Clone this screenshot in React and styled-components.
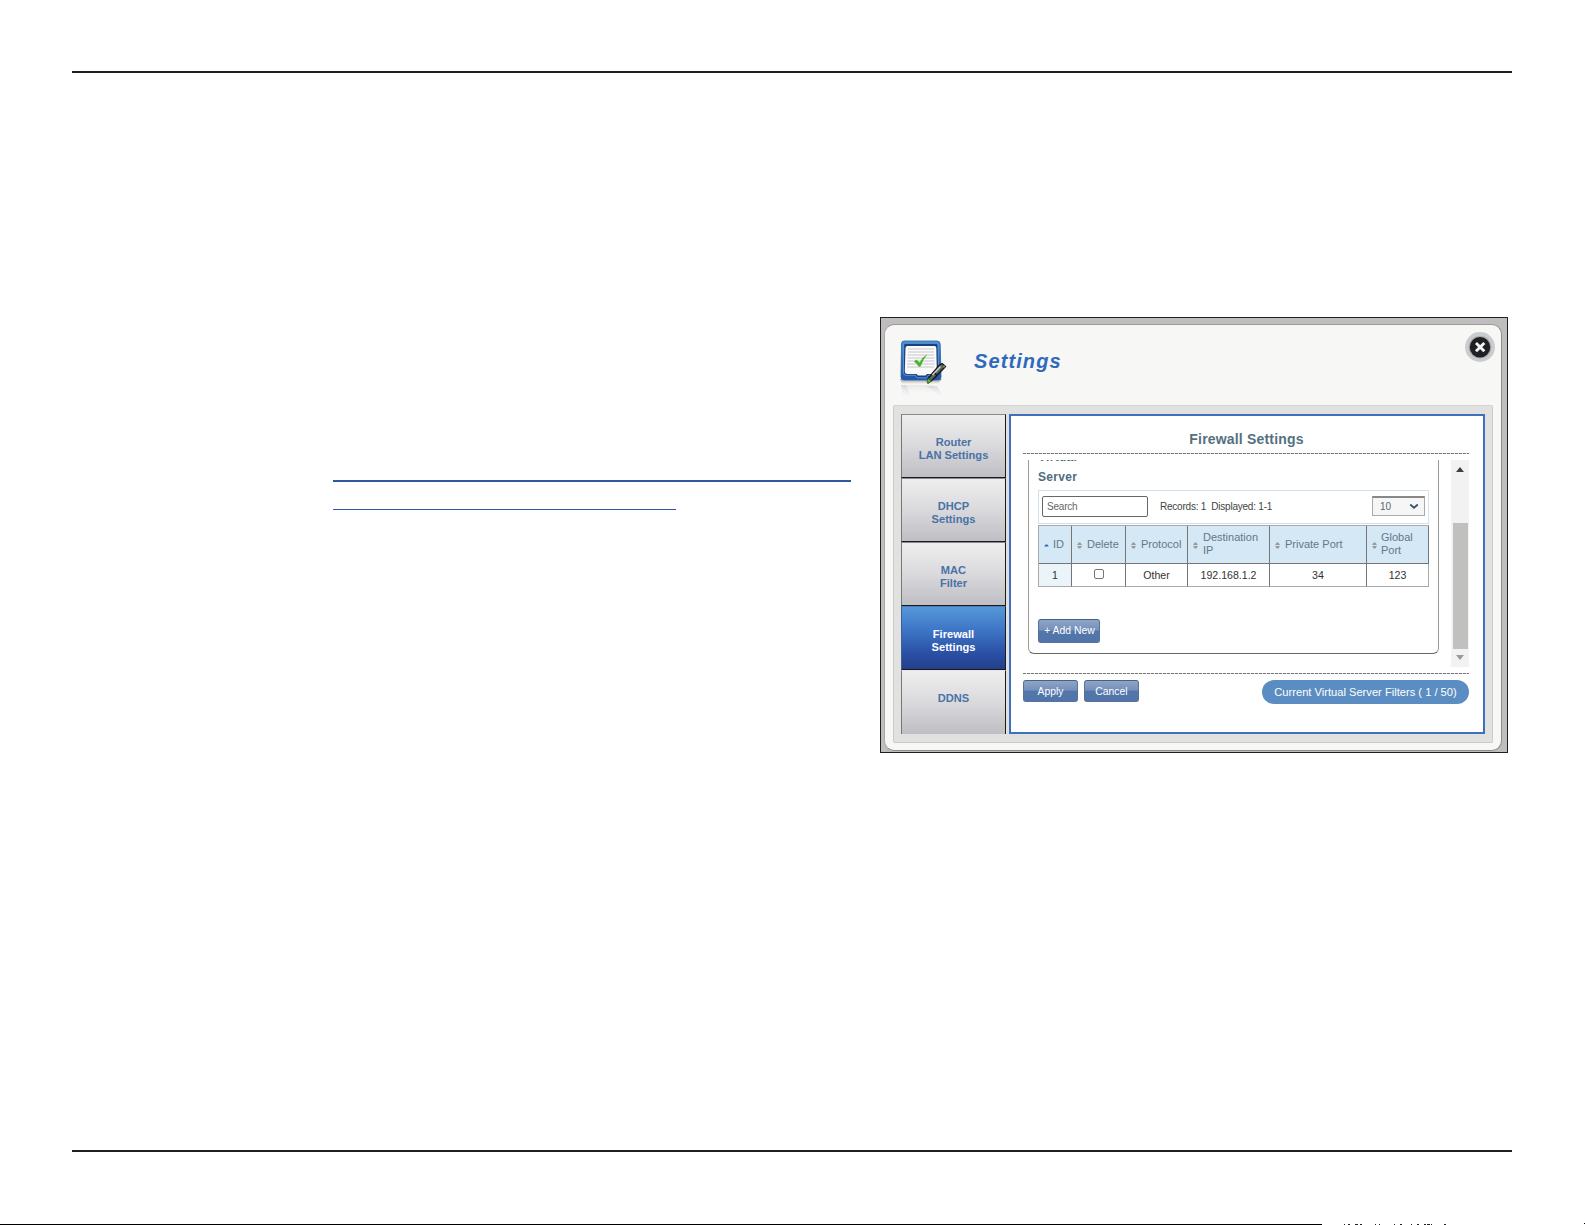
import React, { useState } from 'react'
import styled, { createGlobalStyle, css } from 'styled-components'


const GlobalStyle = createGlobalStyle`
  *, *::before, *::after {
    box-sizing: border-box;
  }
  body {
    margin: 0;
    background: #fff;
    font-family: "Liberation Sans", Arial, sans-serif;
  }
`;

const Page = styled.div`
  display: flex;
  flex-direction: column;
  width: 1585px;
  height: 1225px;
  overflow: hidden;
  padding-top: 71px;
`;

const Rule = styled.hr`
  flex: none;
  width: 1440px;
  height: 2px;
  margin: 0 0 0 72px;
  border: 0;
  background: #231f20;
`;

const Body = styled.main`
  display: flex;
  align-items: flex-start;
  height: 1077px;
  padding: 244px 0 0 333px;
`;

const LinkColumn = styled.div`
  display: flex;
  flex-direction: column;
  gap: 27px;
  width: 547px;
  padding-top: 163px;
`;

const LinkLine = styled.div`
  width: ${props => props.$width}px;
  height: ${props => props.$weight}px;
  background: #30579f;
`;

const PageFooter = styled.footer`
  margin-top: 71px;
  height: 2px;

  svg {
    display: block;
  }
`;

const Frame = styled.section`
  width: 628px;
  height: 436px;
  padding: 6px 5px 1px 3px;
  border: 1px solid #231f20;
  background: #bfbdbd;
`;

const Dialog = styled.div`
  height: 427px;
  padding: 0 8px 7px 8px;
  border: 1px solid #8d8d8d;
  border-top-color: #9b9b9b;
  border-left-color: #aaa9a8;
  border-radius: 10px;
  background: #f7f7f5;
`;

const DialogHeader = styled.header`
  display: flex;
  align-items: flex-start;
  height: 80px;
  padding: 15px 0 0 7px;
`;

const DialogTitle = styled.h1`
  flex: 1;
  margin: 10px 0 0 26px;
  font-size: 20px;
  line-height: 23px;
  font-weight: bold;
  font-style: italic;
  letter-spacing: 1.1px;
  color: #2f69be;
`;

const CloseButton = styled.button`
  width: 30px;
  height: 30px;
  margin: -8px -2px 0 0;
  padding: 0;
  border: 0;
  background: none;

  svg {
    display: block;
  }
`;

const DialogBody = styled.div`
  display: flex;
  gap: 3px;
  height: 338px;
  padding: 8px 7px 0 7px;
  border: 1px solid #cbcbc9;
  border-top-color: #d3d3d1;
  border-radius: 2px;
  background: #e1e1df;
`;

const Menu = styled.nav`
  width: 105px;
  height: 320px;
`;

const MenuItem = styled.div`
  height: 64px;
  padding-top: 21px;
  border: 1px solid #1b1b1d;
  border-left-color: #777;
  border-top-color: #8a8a8a;
  background: linear-gradient(#eeeeee, #dcdbde 45%, #bfbec4);
  color: #4873a7;
  font-size: 11.1px;
  line-height: 13px;
  font-weight: bold;
  text-align: center;
  white-space: pre-line;

  &:last-child {
    border-top-color: #e6e6e8;
    border-bottom: 0;
  }

  ${props => props.$active && css`
    background: linear-gradient(#5597d9, #3c73c4 40%, #2a4fa4 75%, #243f8a);
    border-top-color: #4a7db8;
    border-left-color: #3c5f9b;
    color: #fff;
  `}
`;

const Panel = styled.div`
  width: 476px;
  height: 320px;
  padding: 0 14px 0 12px;
  border: 2px solid #3f70c0;
  background: #fff;
`;

const PanelTitle = styled.h2`
  height: 37px;
  margin: 0;
  padding: 14px 0 0 1px;
  font-size: 14px;
  line-height: 18px;
  letter-spacing: 0.18px;
  text-align: center;
  color: #54707f;
`;

const DashedLine = styled.div`
  height: 1px;
  background: repeating-linear-gradient(90deg, #777 0 3px, #ddd 3px 4px);
`;

const ScrollArea = styled.div`
  display: flex;
  justify-content: space-between;
  height: 207px;
  margin: 6px 0;
  overflow: hidden;
`;

const Fieldset = styled.div`
  width: 411px;
  height: 194px;
  margin-left: 5px;
  padding: 0 9px;
  border: 1px solid #9a9a9a;
  border-top: 0;
  border-bottom-color: #666;
  border-radius: 0 0 6px 6px;
`;

/* The first line is scrolled out of view, only its feet are left. */
const Legend = styled.div`
  height: 43px;
  margin-top: -13px;
  font-size: 12px;
  line-height: 20px;
  font-weight: bold;
  letter-spacing: 0.3px;
  color: #4f6b7c;
`;

const Toolbar = styled.div`
  display: flex;
  align-items: center;
  width: 391px;
  height: 34px;
  padding: 0 3px;
  border: 1px solid #d3e1ec;
  font-size: 9.5px;
  color: #444;
`;

const SearchInput = styled.input`
  width: 106px;
  height: 21px;
  margin-top: -1px;
  padding: 0 4px;
  border: 1px solid #666;
  border-radius: 2px;
  font: 10px "Liberation Sans", Arial, sans-serif;
  letter-spacing: -0.2px;

  &::placeholder {
    color: #666;
    opacity: 1;
  }
`;

const Records = styled.span`
  flex: 1;
  padding-left: 12px;
  margin-top: -1px;
  font-size: 10px;
  letter-spacing: -0.22px;
  white-space: pre;
`;

const PageSize = styled.div`
  display: flex;
  align-items: center;
  justify-content: space-between;
  width: 53px;
  height: 20px;
  margin-top: -2px;
  padding: 0 5px 1px 7px;
  border: 1px solid #aaa;
  border-top: 2px solid #888;
  background: #f6f6f6;
  font-size: 10px;
  color: #5b6670;
`;

const Table = styled.div`
  display: grid;
  grid-template-columns: 33px 54px 62px 82px 97px 62px;
  grid-template-rows: 38px 23px;
  width: 391px;
  margin-top: 1px;
  border: 1px solid #aaa;
  border-width: 1px 0 0 1px;
`;

const HeadCell = styled.div`
  display: flex;
  align-items: center;
  gap: ${props => props.$gap || 5}px;
  padding: 0 0 1px 5px;
  border-right: 1px solid #757575;
  border-bottom: 1px solid #757575;
  background: #d5e8f5;
  color: #657786;
  font-size: 11px;
  line-height: 13px;
  white-space: pre-line;

  &:last-of-type {
    border-right-color: #aaa;
  }

  svg {
    flex: none;
    margin-top: 2px;
  }
`;

const Cell = styled.div`
  display: flex;
  align-items: center;
  justify-content: center;
  border-right: 1px solid #757575;
  border-bottom: 1px solid #aaa;
  background: ${props => (props.$sorted ? '#eaf4f9' : '#fff')};
  color: #333;
  font-size: 10.6px;

  &:last-child {
    border-right-color: #aaa;
  }
`;

const CheckBox = styled.input`
  appearance: none;
  width: 10px;
  height: 10px;
  margin: -2px 0 0 0;
  border: 1px solid #777;
  border-radius: 2px;
`;

const Button = styled.button`
  display: block;
  width: ${props => props.$width || 55}px;
  height: ${props => props.$height || 22}px;
  padding: 1px 0 0 0;
  border: 1px solid #5a7298;
  border-top-color: #466087;
  border-radius: 3px;
  background: linear-gradient(#8fa5c6, #7590bb 45%, #5376aa 52%, #5175aa);
  color: #fff;
  font: 10.4px "Liberation Sans", Arial, sans-serif;
`;

const AddButton = styled(Button)`
  margin-top: 32px;
  padding: 0 0 1px 1px;
`;

const ScrollBar = styled.div`
  display: flex;
  flex-direction: column;
  align-items: center;
  width: 18px;
  padding: 7px 0 7px;
  background: #f2f2f2;
`;

const ScrollThumb = styled.div`
  width: 15px;
  height: 127px;
  margin: 51px 0 6px;
  background: #c0c0be;
`;

const Arrow = styled.div`
  height: 5px;
  border: 4px solid transparent;
  border-top-width: 0;
  border-bottom: 5px solid #404040;

  ${props => props.$down && css`
    border-top: 5px solid #999;
    border-bottom: 0;
  `}
`;

const Actions = styled.div`
  display: flex;
  align-items: flex-start;
  gap: 6px;
  margin-top: 6px;
`;

const FilterCount = styled.div`
  width: 207px;
  height: 24px;
  margin-left: auto;
  border-radius: 12px;
  background: #5b8dc2;
  color: #fff;
  font-size: 11.15px;
  line-height: 24px;
  text-align: center;
  white-space: nowrap;
`;

const SettingsIcon = () => (
  <svg width="48" height="62" viewBox="0 0 48 62">
    <defs>
      <linearGradient id="tablet" x1="0" y1="0" x2="0" y2="1">
        <stop offset="0" stopColor="#4f93d2" />
        <stop offset="0.5" stopColor="#2c67b2" />
        <stop offset="1" stopColor="#2358ab" />
      </linearGradient>
      <linearGradient id="mirror" x1="0" y1="0" x2="0" y2="1">
        <stop offset="0" stopColor="#c9ced5" stopOpacity="0.75" />
        <stop offset="1" stopColor="#f7f7f5" stopOpacity="0" />
      </linearGradient>
      <linearGradient id="shade" x1="0" y1="0" x2="0" y2="1">
        <stop offset="0" stopColor="#777" />
        <stop offset="1" stopColor="#777" stopOpacity="0" />
      </linearGradient>
    </defs>
    <path d="M1 45 L6 45 L12 58 L3 55 Z M26 46 H37 L45 59 Z" fill="url(#mirror)" />
    <path d="M4 45 H33 L38 55 H8 Z" fill="url(#mirror)" opacity="0.5" />
    <path d="M0 39 H42 L38 44 H2 Z" fill="url(#shade)" opacity="0.7" />
    <path d="M4 1 H37 Q40 1 40.2 4 L41 37 Q41 40 38 40 H4 Q1 40 1 37 L1.5 4 Q1.5 1 4 1 Z" fill="url(#tablet)" stroke="#2a5fa6" strokeWidth="0.8" />
    <path d="M5.5 3.3 H36.2 Q38 3.3 38 5.5 L38.7 32 Q38.7 35.3 36 35.3 H28 L26.5 37.8 H17 L15.5 35.3 H6 Q3.3 35.3 3.4 32 L3.7 5 Q3.7 3.3 5.5 3.3 Z" fill="#183f82" stroke="#69a7df" strokeWidth="0.8" />
    <path d="M7.5 6 H34.5 Q36.3 6 36.3 8 L36.8 31 Q36.8 34 34 34 H27 L25.5 35.5 H18 L16.5 34 H7.5 Q4.7 34 4.8 31 L5.5 8 Q5.5 6 7.5 6 Z" fill="#fafafa" />
    <path d="M8 9 H34 M8 12 H34 M7.5 15 H34 M7.5 18 H34.5 M7.5 21 H34.5 M7 24 H34.5 M7 27 H34" stroke="#c5c5c5" strokeWidth="1.2" />
    <path d="M14 21.5 L16.5 19.5 L19.5 22.5 Q22.5 17 27.5 14 Q23 19.5 20.5 26.5 L18.7 26.8 Q17 23.5 14 21.5 Z" fill="#47b42d" />
    <path d="M42 23.5 L45.5 26.5 L33 39.5 L28 43 L28.5 38 L39.5 25 Z" fill="#5c6262" stroke="#17191a" strokeWidth="1.4" strokeLinejoin="round" />
    <path d="M40.5 26.5 L32.5 35" stroke="#c9cfcc" strokeWidth="1.6" />
    <path d="M36.5 35 L35 33.2" stroke="#17191a" strokeWidth="1.6" />
    <path d="M28.3 38.2 L31.5 41.2 L28 43.2 L26.8 41.5 Z" fill="#53b536" stroke="#2c4b29" strokeWidth="0.6" />
    <circle cx="44" cy="26.5" r="1.1" fill="#64b14e" />
  </svg>
);

const CloseIcon = () => (
  <svg width="30" height="30" viewBox="0 0 30 30">
    <circle cx="15" cy="15" r="15" fill="#cbccd0" />
    <circle cx="15" cy="15.3" r="11.3" fill="#a7a8ad" />
    <circle cx="15" cy="15.3" r="10.2" fill="#1f2023" />
    <path d="M12 12 L18.3 18.3 M18.3 12 L12 18.3" stroke="#f3f3f3" strokeWidth="2.9" strokeLinecap="square" />
  </svg>
);

const SortIcon = ({ sorted }) => (
  <svg width="5" height="7" viewBox="0 0 5 7">
    {sorted
      ? <path d="M0.2 4.6 L1.7 2.6 H3.3 L4.8 4.6 Z" fill="#2464c4" />
      : <path d="M0 3 L1.7 0.6 H3.3 L5 3 Z M0 4 L1.7 6.4 H3.3 L5 4 Z" fill="#98999b" />}
  </svg>
);

const ChevronIcon = () => (
  <svg width="10" height="7" viewBox="0 0 10 7">
    <path d="M1.2 1.5 L5 4.8 L8.8 1.5" fill="none" stroke="#3c556f" strokeWidth="1.9" />
  </svg>
);

const menuItems = ['Router\nLAN Settings', 'DHCP\nSettings', 'MAC\nFilter', 'Firewall\nSettings', 'DDNS'];

const columns = [
  { label: 'ID', sorted: true, gap: 4 },
  { label: 'Delete' },
  { label: 'Protocol' },
  { label: 'Destination\nIP' },
  { label: 'Private Port' },
  { label: 'Global\nPort', gap: 4 },
];

// x and width of the marks on the last row of the page
const footerMarks = [
  [1344, 1], [1348, 2], [1355, 3], [1360, 2], [1375, 1], [1379, 1], [1394, 1], [1400, 2],
  [1411, 1], [1417, 2], [1424, 2], [1427, 3], [1431, 1], [1444, 2],
];

const App = () => {

  const [menuActive, setMenuActive] = useState(3);

  return (
    <>
      <GlobalStyle />
      <Page>
        <Rule />
        <Body>
          <LinkColumn>
            <LinkLine $width={518} $weight={2} />
            <LinkLine $width={343} $weight={1} />
          </LinkColumn>
          <Frame>
            <Dialog>
              <DialogHeader>
                <SettingsIcon />
                <DialogTitle>Settings</DialogTitle>
                <CloseButton aria-label="Close"><CloseIcon /></CloseButton>
              </DialogHeader>
              <DialogBody>
                <Menu>
                  {menuItems.map((item, index) => (
                    <MenuItem key={item} $active={menuActive === index} onClick={() => setMenuActive(index)}>{item}</MenuItem>
                  ))}
                </Menu>
                <Panel>
                  <PanelTitle>Firewall Settings</PanelTitle>
                  <DashedLine />
                  <ScrollArea>
                    <Fieldset>
                      <Legend>Virtual<br />Server</Legend>
                      <Toolbar>
                        <SearchInput placeholder="Search" />
                        <Records>{'Records: 1  Displayed: 1-1'}</Records>
                        <PageSize>10 <ChevronIcon /></PageSize>
                      </Toolbar>
                      <Table>
                        {columns.map(column => (
                          <HeadCell key={column.label} $gap={column.gap}>
                            <SortIcon sorted={column.sorted} />
                            <span>{column.label}</span>
                          </HeadCell>
                        ))}
                        <Cell $sorted>1</Cell>
                        <Cell><CheckBox type="checkbox" /></Cell>
                        <Cell>Other</Cell>
                        <Cell>192.168.1.2</Cell>
                        <Cell>34</Cell>
                        <Cell>123</Cell>
                      </Table>
                      <AddButton $width={62} $height={24}>+ Add New</AddButton>
                    </Fieldset>
                    <ScrollBar>
                      <Arrow />
                      <ScrollThumb />
                      <Arrow $down />
                    </ScrollBar>
                  </ScrollArea>
                  <DashedLine />
                  <Actions>
                    <Button>Apply</Button>
                    <Button>Cancel</Button>
                    <FilterCount>Current Virtual Server Filters ( 1 / 50)</FilterCount>
                  </Actions>
                </Panel>
              </DialogBody>
            </Dialog>
          </Frame>
        </Body>
        <Rule />
        <PageFooter>
          <svg width="1585" height="2" viewBox="0 0 1585 2" shapeRendering="crispEdges">
            <rect x="0" y="1" width="1322" height="1" fill="#000" />
            {footerMarks.map(([x, width]) => (
              <rect key={x} x={x} y="1" width={width} height="1" fill="#222" />
            ))}
            <rect x="1584" y="0" width="1" height="1" fill="#000" />
          </svg>
        </PageFooter>
      </Page>
    </>
  )
}

export default App
